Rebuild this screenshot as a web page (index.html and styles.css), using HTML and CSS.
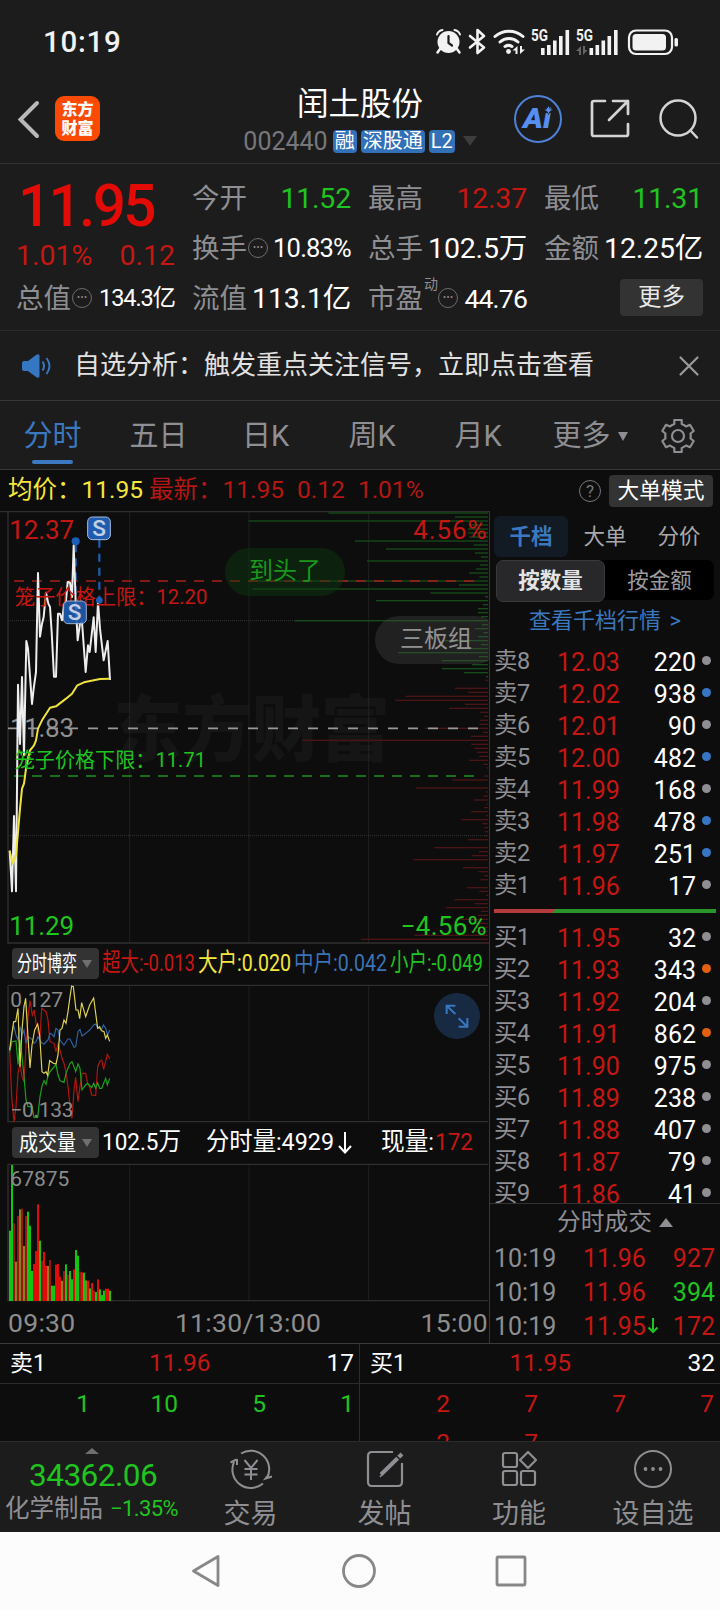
FILE: index.html
```html
<!DOCTYPE html>
<html lang="zh-CN">
<head>
    <meta charset="UTF-8">
    <meta name="viewport" content="width=device-width, initial-scale=1.0">
    <title>闰土股份 002440</title>
    <link rel="stylesheet" href="styles.css">
</head>
<body>
<div class="status-bar">
    <span class="clock">10:19</span>
    <svg class="status-icons" width="248" height="30" viewBox="0 0 248 30">
        <g fill="#f2f2f2" stroke="none">
            <circle cx="13.500" cy="15" r="11"/>
            <path d="M5 22 L2.500 25.500 M22 22 L24.500 25.500" stroke="#f2f2f2" stroke-width="2.500" stroke-linecap="round"/>
            <path d="M2 7.500 A7 7 0 0 1 7.500 3 M25 7.500 A7 7 0 0 0 19.500 3" fill="none" stroke="#f2f2f2" stroke-width="2" stroke-linecap="round"/>
            <path d="M13.500 9 V16 L17 18.500" fill="none" stroke="#1c1c1c" stroke-width="2.200" stroke-linecap="round"/>
            <path d="M35 9 L49 20.500 L42.500 26 V3 L49 9 L35 20.500" fill="none" stroke="#f2f2f2" stroke-width="2.600" stroke-linejoin="round" stroke-linecap="round"/>
            <g fill="none" stroke="#f2f2f2" stroke-width="3" stroke-linecap="round">
                <path d="M60 9.500 A21 21 0 0 1 88 9.500"/>
                <path d="M65 15 A13.500 13.500 0 0 1 83 15"/>
                <path d="M70 19.500 A6.500 6.500 0 0 1 77 19.500"/>
            </g>
            <circle cx="73.500" cy="24.500" r="2.400"/>
            <path d="M82.500 19 V27 H80.500 V23.500 H77.500 Z M85 27 V19 H87 V22.500 H90 Z"/>
            <rect x="106" y="21" width="3.600" height="7"/>
            <rect x="112" y="18" width="3.600" height="10"/>
            <rect x="118" y="13.500" width="3.600" height="14.500"/>
            <rect x="124" y="9" width="3.600" height="19"/>
            <rect x="130.500" y="3" width="3.600" height="25"/>
            <rect x="154.500" y="21" width="3.600" height="7"/>
            <rect x="160.500" y="18" width="3.600" height="10"/>
            <rect x="166.500" y="13.500" width="3.600" height="14.500"/>
            <rect x="172.500" y="9" width="3.600" height="19"/>
            <rect x="179" y="3" width="3.600" height="25"/>
            <path d="M146 19 V28 H144 V24 H141 Z M148 28 V19 H150 V23 H152.500 Z" fill="#666"/>
            <text class="net" x="96" y="14" textLength="17" lengthAdjust="spacingAndGlyphs">5G</text>
            <text class="net" x="141" y="14" textLength="17" lengthAdjust="spacingAndGlyphs">5G</text>
            <rect x="194" y="3.500" width="43" height="23.500" rx="7" fill="none" stroke="#f2f2f2" stroke-width="2.200"/>
            <rect x="197.500" y="7" width="33.500" height="16.500" rx="3.500"/>
            <rect x="239.500" y="11" width="3.500" height="8.500" rx="1.500"/>
        </g>
    </svg>
</div>

<div class="header">
    <div class="header-left">
        <svg width="24" height="40" viewBox="0 0 24 40" fill="none" stroke="#b9b9b9" stroke-width="4" stroke-linecap="round"><path d="M20 4 L3.500 20.500 L20 37"/></svg>
        <div class="logo">东方<br>财富</div>
    </div>
    <div class="header-title">
        <h1>闰土股份</h1>
        <div class="code-row">
            <span class="code">002440</span>
            <span class="badge">融</span>
            <span class="badge">深股通</span>
            <span class="badge">L2</span>
            <svg class="code-arrow" width="14" height="10" viewBox="0 0 14 10"><path d="M0 0 H14 L7 10 Z" fill="#3d3d3d"/></svg>
        </div>
    </div>
    <div class="header-right">
        <svg width="48" height="48" viewBox="0 0 48 48">
            <circle cx="24" cy="24" r="23" fill="none" stroke="#4d82d8" stroke-width="2"/>
            <text class="ai" x="9" y="33" textLength="28" lengthAdjust="spacingAndGlyphs">Ai</text>
            <path d="M34.500 10.500 L36 13.500 L39 15 L36 16.500 L34.500 19.500 L33 16.500 L30 15 L33 13.500 Z" fill="#568ff0" stroke="#1c1c1c" stroke-width=".8"/>
        </svg>
        <svg width="40" height="40" viewBox="0 0 40 40" fill="none" stroke="#d4d4d4" stroke-width="2.700" stroke-linecap="round" stroke-linejoin="round">
            <path d="M15 2 H4 Q2 2 2 4 V35 Q2 37 4 37 H36 Q38 37 38 35 V25"/>
            <path d="M23 2 H38 V15 M38 2 L19 21"/>
        </svg>
        <svg width="42" height="42" viewBox="0 0 42 42" fill="none" stroke="#d4d4d4" stroke-width="2.500" stroke-linecap="round">
            <circle cx="20" cy="20" r="17.500"/>
            <path d="M32.500 32.500 L39 39.500"/>
        </svg>
    </div>
</div>

<div class="quote">
    <div class="quote-col">
        <div class="price">11.95</div>
        <div class="change"><span>1.01%</span><span>0.12</span></div>
        <div class="cell"><span class="label">总值<i class="dots">•••</i></span><span class="value small">134.3亿</span></div>
    </div>
    <div class="quote-col">
        <div class="cell"><span class="label">今开</span><span class="value down">11.52</span></div>
        <div class="cell"><span class="label">换手<i class="dots">•••</i></span><span class="value mid">10.83%</span></div>
        <div class="cell"><span class="label">流值</span><span class="value">113.1亿</span></div>
    </div>
    <div class="quote-col">
        <div class="cell"><span class="label">最高</span><span class="value up">12.37</span></div>
        <div class="cell"><span class="label">总手</span><span class="value">102.5万</span></div>
        <div class="cell"><span class="label">市盈<sup>动</sup><i class="dots">•••</i></span><span class="value pe">44.76</span></div>
    </div>
    <div class="quote-col">
        <div class="cell"><span class="label">最低</span><span class="value down">11.31</span></div>
        <div class="cell"><span class="label">金额</span><span class="value">12.25亿</span></div>
        <div class="cell end"><span class="more">更多</span></div>
    </div>
</div>

<div class="notice">
    <svg width="30" height="26" viewBox="0 0 30 26">
        <path d="M2 8 H6 L14 2 Q17.500 0 17.500 3 V23 Q17.500 26 14 24 L6 18 H2 Q0 18 0 16 V10 Q0 8 2 8 Z" fill="#3577c2"/>
        <path d="M20.500 8.500 Q23.500 13 20.500 17.500 M24.500 5 Q30.500 13 24.500 21" fill="none" stroke="#3577c2" stroke-width="2"/>
    </svg>
    <span class="notice-text">自选分析：触发重点关注信号，立即点击查看</span>
    <svg width="20" height="20" viewBox="0 0 20 20" stroke="#9a9a9a" stroke-width="2.200" stroke-linecap="round"><path d="M1.500 1.500 L18.500 18.500 M18.500 1.500 L1.500 18.500"/></svg>
</div>

<div class="tabs">
    <span class="tab active">分时</span>
    <span class="tab">五日</span>
    <span class="tab">日K</span>
    <span class="tab">周K</span>
    <span class="tab">月K</span>
    <span class="tab">更多<svg width="10" height="9" viewBox="0 0 10 9"><path d="M0 0 H10 L5 9 Z" fill="#8e8e93"/></svg></span>
    <span class="tab">
        <svg width="36" height="36" viewBox="0 0 36 36" fill="none" stroke="#8e8e93" stroke-width="2.200" stroke-linejoin="round">
            <path d="M14.300 2 H21.700 V6 Q24 6.800 26 8.500 L30 6.800 L33.700 13 L30.500 15.500 Q31 18 30.500 20.500 L33.700 23 L30 29.200 L26 27.500 Q24 29.200 21.700 30 V34 H14.300 V30 Q12 29.200 10 27.500 L6 29.200 L2.300 23 L5.500 20.500 Q5 18 5.500 15.500 L2.300 13 L6 6.800 L10 8.500 Q12 6.800 14.300 6 Z"/>
            <circle cx="18" cy="18" r="6"/>
        </svg>
    </span>
</div>

<div class="avg-bar">
    <span class="avg">均价：11.95</span>
    <span class="last">最新：11.95</span>
    <span class="last">0.12</span>
    <span class="last">1.01%</span>
    <span class="help">?</span>
    <span class="big-mode">大单模式</span>
</div>

<div class="main">
    <div class="charts">
        <div class="price-chart">
            <!-- all chart drawings use 3 units per pixel -->
            <svg width="489" height="433" viewBox="0 0 1467 1299">
                <text class="watermark" x="340" y="733" textLength="830" lengthAdjust="spacingAndGlyphs">东方财富</text>
                <path class="frame" d="M0 2 H1467 M24 2 V1296 H1467"/>
                <path class="grid" d="M24 329 H1464 M24 974 H1464 M389 2 V1296 M747 2 V1296 M1106 2 V1296"/>
                <g id="depth"></g>
                <text class="axis up" x="28" y="84" textLength="194">12.37</text>
                <text class="axis up" x="1240" y="84" textLength="220">4.56%</text>
                <text class="axis flat" x="30" y="679" textLength="192">11.83</text>
                <text class="axis down" x="28" y="1273" textLength="194">11.29</text>
                <text class="axis down" x="1202" y="1273" textLength="258">−4.56%</text>
                <path class="limit-up" d="M42 210 H1424"/>
                <path class="prev-close" d="M24 652 H1440"/>
                <path class="limit-down" d="M42 795 H1424"/>
                <path class="mark-line" d="M227 100 V290 M298 86 V262"/>
                <polyline class="line price-line" points="29,1019 36,1141 42,915 48,1141 54,521 60,699 66,498 72,733 79,390 84,413 96,579 101,533 108,483 114,186 120,377 126,338 131,318 138,245 145,278 150,288 155,363 162,497 168,497 174,308 180,308 186,328 192,283 198,268 203,213 210,215 216,258 221,103 227,273 233,388 240,338 246,333 257,483 264,403 269,423 281,319 287,423 294,273 300,353 311,448 323,390 330,507"/>
                <polyline class="line avg-line" points="29,1019 38,1058 48,1033 54,963 60,893 66,833 72,818 78,773 84,743 90,718 102,703 108,688 114,653 126,628 150,590 168,586 198,563 216,548 232,523 252,514 300,504 330,503"/>
                <text class="limit-text up" x="44" y="278" textLength="578" lengthAdjust="spacingAndGlyphs">笼子价格上限：12.20</text>
                <text class="limit-text down" x="44" y="767" textLength="574" lengthAdjust="spacingAndGlyphs">笼子价格下限：11.71</text>
                <circle cx="227" cy="91" r="12" fill="#1c5fb8"/>
                <circle cx="298" cy="268" r="10" fill="#1c5fb8"/>
                <g class="sell-mark">
                    <rect x="263" y="18" width="68" height="68" rx="14"/>
                    <text x="297" y="75">S</text>
                    <rect x="190" y="270" width="69" height="68" rx="14" opacity=".9"/>
                    <text x="224" y="327">S</text>
                </g>
            </svg>
            <span class="pill green">到头了</span>
            <span class="pill grey">三板组</span>
        </div>

        <div class="sub-head">
            <span class="select"><svg width="86" height="31" viewBox="0 0 86 31"><text class="sel" x="5" y="23" textLength="60" lengthAdjust="spacingAndGlyphs">分时博弈</text><path d="M70 12 H80 L75 20 Z" fill="#6f6f6f"/></svg></span>
            <svg width="386" height="36" viewBox="0 0 386 36">
                <text class="sub up" x="-1" y="25" textLength="93" lengthAdjust="spacingAndGlyphs">超大:-0.013</text>
                <text class="sub avg" x="95" y="25" textLength="93" lengthAdjust="spacingAndGlyphs">大户:0.020</text>
                <text class="sub blue" x="191" y="25" textLength="93" lengthAdjust="spacingAndGlyphs">中户:0.042</text>
                <text class="sub down" x="287" y="25" textLength="93" lengthAdjust="spacingAndGlyphs">小户:-0.049</text>
            </svg>
        </div>

        <div class="game-chart">
            <svg width="489" height="137" viewBox="0 135 1467 411">
                <path class="frame" d="M24 136 H1464 M24 136 V545 H1464"/>
                <path class="grid" d="M389 136 V545 M747 136 V545 M1106 136 V545"/>
                <polyline class="thin red-line" points="29,330 35,470 42,545 48,500 54,400 60,370 66,410 72,425 78,320 84,230 90,182 97,225 103,210 108,250 115,280 120,290 125,205 138,215 144,240 150,305 162,310 168,335 174,312 180,330 186,355 192,370 198,395 204,440 210,500 216,535 222,450 227,412 234,485 240,440 246,400 257,400 263,430 269,440 275,465 287,467 293,380 299,365 305,360 311,388 322,343 329,356"/>
                <polyline class="thin green-line" points="29,335 36,305 48,303 54,373 60,300 66,350 72,410 78,480 84,500 96,500 102,532 113,532 120,470 126,438 132,422 138,433 144,408 150,395 168,374 174,405 180,422 192,427 198,400 210,370 216,365 222,380 227,395 234,372 240,385 246,450 257,435 263,430 275,443 281,430 287,445 293,428 299,445 305,445 317,415 322,435 329,415"/>
                <polyline class="thin blue-line" points="29,330 36,280 41,256 48,285 54,300 60,260 66,285 72,270 78,310 84,290 96,298 102,310 108,305 114,290 120,300 126,310 132,312 144,300 150,280 156,283 162,290 168,265 174,270 180,300 192,315 204,297 210,297 222,322 227,320 234,275 240,268 246,288 257,280 269,270 281,255 287,252 293,263 305,268 310,255 317,265 323,285 329,270"/>
                <polyline class="thin yellow-line" points="29,330 36,280 41,245 47,245 54,205 60,380 66,270 72,200 77,175 84,290 90,384 96,315 104,270 113,252 119,285 126,395 132,400 138,395 143,406 149,362 160,370 168,372 174,345 180,270 186,265 192,240 198,250 204,215 210,170 215,138 220,140 228,210 234,210 239,236 245,188 257,230 269,195 281,174 293,265 299,260 304,272 312,275 317,295 322,285 329,304"/>
                <text class="scale" x="31" y="200" textLength="158">0.127</text>
                <text class="scale" x="31" y="530" textLength="190">−0.133</text>
                <circle cx="1371" cy="228" r="69" fill="#182a42"/>
                <path d="M1366 222 L1341 198 M1340 222 V197 H1366 M1376 235 L1402 260 M1376 260 H1402 V234" fill="none" stroke="#3577c2" stroke-width="6"/>
            </svg>
        </div>

        <div class="sub-head volume-head">
            <span class="select"><svg width="86" height="31" viewBox="0 0 86 31"><text class="sel" x="7" y="23" textLength="57" lengthAdjust="spacingAndGlyphs">成交量</text><path d="M70 12 H80 L75 20 Z" fill="#6f6f6f"/></svg></span>
            <svg width="386" height="36" viewBox="0 0 386 36">
                <text class="sub" x="-1" y="26" textLength="79" lengthAdjust="spacingAndGlyphs">102.5万</text>
                <text class="sub" x="103" y="26" textLength="128" lengthAdjust="spacingAndGlyphs">分时量:4929</text>
                <path d="M242 8 V28 M236 22 L242 28.500 L248 22" fill="none" stroke="#fff" stroke-width="2"/>
                <text class="sub" x="278" y="26" textLength="53" lengthAdjust="spacingAndGlyphs">现量:</text>
                <text class="sub up" x="332" y="26" textLength="38" lengthAdjust="spacingAndGlyphs">172</text>
            </svg>
        </div>

        <div class="volume-chart">
            <svg width="489" height="137" viewBox="0 672 1467 411">
                <path class="frame" d="M24 673 H1464 M24 673 V1082 H1464"/>
                <path class="grid" d="M389 673 V1082 M747 673 V1082 M1106 673 V1082"/>
                <g id="volume"></g>
                <text class="scale" x="31" y="738" textLength="177">67875</text>
            </svg>
        </div>
        <div class="time-axis"><span>09:30</span><span>11:30/13:00</span><span>15:00</span></div>
    </div>

    <div class="side">
        <div class="side-tabs"><span class="active">千档</span><span>大单</span><span>分价</span></div>
        <div class="toggle"><span class="active">按数量</span><span>按金额</span></div>
        <div class="depth-link">查看千档行情 &gt;</div>
        <div class="book">
            <div id="asks" class="asks"></div>
            <svg class="ratio" width="222" height="4" viewBox="0 0 222 4"><path d="M0 0 H222 V4 H0 Z" fill="#299429"/><path d="M0 0 H62 L58 4 H0 Z" fill="#b43c3c"/></svg>
            <div id="bids"></div>
        </div>
        <div class="deals-head">分时成交<svg width="14" height="9" viewBox="0 0 14 9"><path d="M7 0 L14 9 H0 Z" fill="#8e8e93"/></svg></div>
        <div class="deal"><span>10:19</span><span class="up">11.96</span><span class="up">927</span></div>
        <div class="deal"><span>10:19</span><span class="up">11.96</span><span class="down">394</span></div>
        <div class="deal"><span>10:19</span><span class="up">11.95<svg width="12" height="16" viewBox="0 0 12 16" fill="none" stroke="#1fc41f" stroke-width="2"><path d="M6 0 V14 M1.500 9.500 L6 14 L10.500 9.500"/></svg></span><span class="up">172</span></div>
    </div>
</div>

<div class="queues">
    <div class="queue">
        <div class="queue-head"><span>卖1</span><span class="up">11.96</span><span>17</span></div>
        <div class="queue-list down"><span>1</span><span>10</span><span>5</span><span>1</span></div>
    </div>
    <div class="queue">
        <div class="queue-head"><span>买1</span><span class="up">11.95</span><span>32</span></div>
        <div class="queue-list up"><span>2</span><span>7</span><span>7</span><span>7</span><span>2</span><span>7</span></div>
    </div>
</div>

<div class="bottom-nav">
    <div class="index">
        <svg width="14" height="6" viewBox="0 0 14 6"><path d="M7 0 L14 6 H0 Z" fill="#6f6f72"/></svg>
        <div class="index-value">34362.06</div>
        <div class="index-name">化学制品<span>−1.35%</span></div>
    </div>
    <div class="nav-item">
        <svg width="44" height="40" viewBox="0 0 44 40" fill="none" stroke="#8e8e93" stroke-width="2">
            <path d="M12 4.500 A18.500 18.500 0 0 1 38 29 M40 25 L36.500 29.500 L43 27.500 M34 34.500 A18.500 18.500 0 0 1 5 13 M8 10 V16 M1.500 13.500 L7.500 10.500"/>
            <path d="M15.500 11 L22 19 L28.500 11 M22 19 V31 M15.500 20 H28.500 M15.500 25.500 H28.500"/>
        </svg>
        <span>交易</span>
    </div>
    <div class="nav-item">
        <svg width="38" height="40" viewBox="0 0 38 40" fill="none" stroke="#8e8e93" stroke-width="2.200">
            <path d="M27 3 H6 Q2 3 2 7 V33 Q2 37 6 37 H32 Q36 37 36 33 V14"/>
            <path d="M36 5 L15 25.500" stroke-width="4"/><path d="M14 28 L18 23" stroke-width="1.500"/><path d="M30.500 7 L34 10.500" stroke="#1c1c1c" stroke-width="1.500"/>
        </svg>
        <span>发帖</span>
    </div>
    <div class="nav-item">
        <svg width="38" height="40" viewBox="0 0 38 40" fill="none" stroke="#8e8e93" stroke-width="2.200" stroke-linejoin="round">
            <rect x="3" y="4" width="14" height="14" rx="2"/>
            <rect x="3" y="22" width="14" height="14" rx="2"/>
            <rect x="21" y="22" width="14" height="14" rx="2"/>
            <path d="M28 3 L36 11 L28 19 L20 11 Z"/>
        </svg>
        <span>功能</span>
    </div>
    <div class="nav-item">
        <svg width="40" height="40" viewBox="0 0 40 40" fill="#8e8e93">
            <circle cx="20" cy="20" r="18" fill="none" stroke="#8e8e93" stroke-width="2"/>
            <circle cx="12.500" cy="20" r="1.900"/><circle cx="20" cy="20" r="1.900"/><circle cx="27.500" cy="20" r="1.900"/>
        </svg>
        <span>设自选</span>
    </div>
</div>

<div class="system-nav">
    <svg width="30" height="36" viewBox="0 0 30 36"><path d="M27 3.500 V32.500 L2.500 18 Z"/></svg>
    <svg width="36" height="36" viewBox="0 0 36 36"><circle cx="18" cy="18" r="15.500"/></svg>
    <svg width="32" height="32" viewBox="0 0 32 32"><rect x="2" y="2" width="28" height="28" rx="1"/></svg>
</div>

<script src="app.js"></script>
</body>
</html>
```
FILE: styles.css
```css
* {
    box-sizing: border-box;
}

body {
    margin: 0;
    width: 720px;
    height: 1610px;
    overflow: hidden;
    background: #1c1c1c;
    color: #fff;
    font-family: Roboto, "Noto Sans CJK SC", sans-serif;
    line-height: 1;
}

svg {
    display: block;
    flex: none;
    overflow: visible;
}

.up {
    color: #c41712;
    fill: #c41712;
}

.down {
    color: #1fc41f;
    fill: #1fc41f;
}

.blue {
    fill: #3b74b6;
}

/* Status bar */
.status-bar {
    display: flex;
    justify-content: space-between;
    align-items: center;
    height: 80px;
    padding: 4px 37px 0 43px;
}

.clock {
    padding-top: 2px;
    font-size: 29.5px;
    font-weight: 500;
    letter-spacing: .7px;
    color: #f2f2f2;
}

.net {
    font-size: 16.5px;
    font-weight: 700;
}

/* Header */
.header {
    display: grid;
    grid-template-columns: 1fr auto 1fr;
    height: 84px;
    border-bottom: 1px solid #333;
}

.header-left {
    display: flex;
    align-items: center;
    gap: 14px;
    padding: 0 0 6px 17px;
}

.logo {
    width: 45px;
    height: 45px;
    padding-top: 5px;
    border-radius: 9px;
    background: #fb4a04;
    font-size: 16px;
    font-weight: 900;
    line-height: 18.5px;
    text-align: center;
}

.header-title {
    padding-top: 5px;
}

.header-title h1 {
    margin: 0;
    font-size: 31.5px;
    font-weight: 400;
    line-height: 40px;
    text-align: center;
}

.code-row {
    display: flex;
    align-items: center;
    gap: 4px;
    height: 24px;
    margin-top: 4px;
}

.code {
    margin-right: 1px;
    font-size: 25px;
    color: #77777b;
}

.badge {
    height: 23px;
    padding: 0 2px;
    border-radius: 4px;
    background: #3270b8;
    font-size: 20px;
    line-height: 22px;
}

.code-arrow {
    margin-left: 4px;
}

.header-right {
    display: flex;
    align-items: center;
    justify-content: flex-end;
    gap: 28px;
    padding: 0 20px 6px 0;
}

.ai {
    font-size: 27px;
    font-weight: 900;
    font-style: italic;
    fill: #568ff0;
}

/* Quote */
.quote {
    display: grid;
    grid-template-columns: repeat(4, 159px);
    justify-content: space-between;
    height: 167px;
    padding: 10px 17px 0 16px;
    border-bottom: 1px solid #2a2a2a;
}

.price {
    height: 64px;
    padding-left: 2px;
    font-size: 58.5px;
    font-weight: 500;
    line-height: 65px;
    letter-spacing: -2.7px;
    color: #e30b06;
}

.change {
    display: flex;
    justify-content: space-between;
    height: 36px;
    font-size: 28.5px;
    line-height: 36px;
    color: #c41712;
}

.cell {
    display: flex;
    align-items: center;
    justify-content: space-between;
    height: 50px;
    white-space: nowrap;
}

.cell.end {
    justify-content: flex-end;
    padding-bottom: 3px;
}

.label {
    display: flex;
    align-items: center;
    font-size: 27.5px;
    color: #8e8e93;
}

.label sup {
    align-self: flex-start;
    width: 13px;
    margin: -8px 0 0 1px;
    font-size: 14px;
}

.dots {
    width: 20px;
    height: 20px;
    margin: -3px 0 0 1px;
    border: 1.5px solid #6c6c70;
    border-radius: 50%;
    font-size: 9px;
    font-style: normal;
    letter-spacing: .5px;
    line-height: 17px;
    text-align: center;
    text-indent: .5px;
}

.value {
    font-size: 28.5px;
    letter-spacing: -.2px;
}

.value.mid {
    font-size: 25.5px;
    letter-spacing: -.8px;
}

.value.small {
    font-size: 23.5px;
    letter-spacing: -1.1px;
}

.value.pe {
    font-size: 26.5px;
    letter-spacing: -.8px;
}

.more {
    width: 83px;
    height: 37px;
    border-radius: 4px;
    background: #333;
    font-size: 23.5px;
    line-height: 36px;
    text-align: center;
    color: #e8e8e8;
}

/* Notice */
.notice {
    display: flex;
    align-items: center;
    height: 70px;
    padding: 0 21px 0 22px;
    border-bottom: 1px solid #383838;
}

.notice-text {
    flex: 1;
    margin: -2px 0 0 22px;
    font-size: 26px;
    color: #e2e2e2;
}

/* Tabs */
.tabs {
    display: grid;
    grid-template-columns: 105px 107px 107px 106px 106px 118px 58px;
    height: 69px;
    padding-top: 2px;
    border-bottom: 1px solid #383838;
}

.tab {
    display: flex;
    align-items: center;
    justify-content: center;
    gap: 7px;
    font-size: 29px;
    color: #8e8e93;
}

.tab.active {
    position: relative;
    color: #3b78bf;
}

.tab.active::after {
    content: "";
    position: absolute;
    left: 32px;
    bottom: 5px;
    width: 41px;
    height: 4px;
    border-radius: 2px;
    background: #3b78bf;
}

.avg-bar {
    display: flex;
    align-items: center;
    height: 41px;
    padding: 0 7px 0 8px;
    background: #0d0d0d;
    font-size: 24.5px;
}

.avg {
    margin-right: 6px;
    fill: #f5e63c;
    color: #f5e63c;
}

.last {
    margin-right: 13px;
    color: #b41712;
}

.help {
    width: 22px;
    height: 22px;
    margin: 0 8px 0 auto;
    border: 1.5px solid #77777a;
    border-radius: 50%;
    font-size: 17px;
    line-height: 20px;
    text-align: center;
    color: #77777a;
}

.big-mode {
    width: 104px;
    height: 32px;
    border-radius: 4px;
    background: #333;
    font-size: 21.700px;
    line-height: 32px;
    text-align: center;
}

/* Charts */
.main {
    display: flex;
    height: 833px;
    background: #0d0d0d;
    border-bottom: 1px solid #3a3a3a;
}

.charts {
    width: 490px;
    border-right: 1px solid #383838;
}

.price-chart {
    position: relative;
    height: 433px;
    overflow: hidden;
}

.frame {
    fill: none;
    stroke: #2f2f2f;
    stroke-width: 4;
}

.grid {
    fill: none;
    stroke: #343434;
    stroke-width: 3;
    stroke-dasharray: 3 3;
}

.watermark {
    font-size: 215px;
    font-weight: 900;
    fill: #151515;
}

.axis {
    font-size: 78px;
}

.flat {
    fill: #8f8f8f;
}

.limit-text {
    font-size: 63px;
}

.limit-up,
.limit-down {
    fill: none;
    stroke: #a81f1a;
    stroke-width: 4;
    stroke-dasharray: 30 24;
}

.limit-down {
    stroke: #1f8f24;
}

.prev-close {
    fill: none;
    stroke: #999;
    stroke-width: 5;
    stroke-dasharray: 30 30;
}

.mark-line {
    fill: none;
    stroke: #1f5ba8;
    stroke-width: 7;
    stroke-dasharray: 24 18;
}

.line {
    fill: none;
    stroke-width: 6;
    stroke-linejoin: round;
}

.price-line {
    stroke: #eee;
}

.avg-line {
    stroke: #f0e23c;
}

.sell-mark rect {
    fill: #1f5cb0;
    stroke: #a9c0e0;
    stroke-width: 3;
}

.sell-mark text {
    font-size: 68px;
    font-weight: 500;
    text-anchor: middle;
    fill: #c3d0e4;
}

.pill {
    position: absolute;
    height: 48px;
    font-size: 24px;
    line-height: 46px;
}

.pill.green {
    left: 225px;
    top: 37px;
    width: 120px;
    padding-left: 24px;
    border-radius: 24px;
    background: rgba(10, 60, 15, .45);
    color: #1b971b;
}

.pill.grey {
    left: 375px;
    top: 105px;
    width: 125px;
    padding-left: 25px;
    border-radius: 24px;
    background: rgba(80, 80, 80, .3);
    color: #929292;
}

.sub-head {
    display: flex;
    align-items: center;
    gap: 4px;
    height: 41px;
    padding: 0 0 2px 12px;
}

.volume-head {
    height: 42px;
}

.game-chart,
.volume-chart {
    height: 137px;
}

.select {
    width: 87px;
    height: 31px;
    border-radius: 4px;
    background: #333;
}

.sel {
    font-size: 22px;
    fill: #fff;
}

.sub {
    font-size: 24.5px;
}

.sub:not(.up):not(.down):not(.avg):not(.blue) {
    fill: #fff;
}

.thin {
    fill: none;
    stroke-width: 3.500;
}

.red-line {
    stroke: #b31511;
}

.green-line {
    stroke: #1aa31a;
}

.blue-line {
    stroke: #2f62a0;
}

.yellow-line {
    stroke: #e0d350;
}

.scale {
    font-size: 63px;
    fill: #8b8b8b;
}

.time-axis {
    display: flex;
    justify-content: space-between;
    align-items: center;
    height: 42px;
    padding: 2px 1px 0 8px;
    font-size: 26.5px;
    letter-spacing: .3px;
    color: #8e8e8e;
}

/* Order book */
.side {
    width: 230px;
    padding-top: 5px;
}

.side-tabs {
    display: grid;
    grid-template-columns: repeat(3, 74px);
    height: 40px;
    padding-left: 4px;
    font-size: 21.5px;
    line-height: 41px;
    text-align: center;
    color: #a9a9ab;
}

.side-tabs .active {
    border-radius: 6px;
    background: #121a23;
    font-weight: 700;
    color: #3b78bf;
}

.toggle {
    display: grid;
    grid-template-columns: 1fr 1fr;
    width: 218px;
    height: 40px;
    margin: 4px 0 0 6px;
    border-radius: 7px;
    background: #000;
    font-size: 21.5px;
    line-height: 41px;
    text-align: center;
    color: #9c9c9e;
}

.toggle .active {
    border: 1px solid #39393b;
    border-radius: 7px;
    background: #28282b;
    font-weight: 700;
    line-height: 40px;
    color: #e4e4e4;
}

.depth-link {
    height: 40px;
    font-size: 22px;
    line-height: 42px;
    text-align: center;
    word-spacing: 3px;
    color: #3b78bf;
}

.book {
    height: 564px;
    overflow: hidden;
    border-bottom: 1px solid #333;
}

.asks {
    margin-top: -26px;
}

.order {
    display: grid;
    grid-template-columns: 63px 66px 73px 8px;
    align-items: center;
    height: 32px;
    padding-left: 4px;
    font-size: 25px;
}

.order .name {
    font-size: 23.5px;
    letter-spacing: -.6px;
    color: #8e8e93;
}

.order .amount {
    text-align: right;
}

.order .dot {
    width: 9px;
    height: 9px;
    margin: -3px 0 0 6px;
    border-radius: 50%;
    background: #8e8e93;
}

.order .dot.buy {
    background: #e35f12;
}

.order .dot.sell {
    background: #3577c2;
}

.ratio {
    margin: 7px 0 9px 4px;
}

.deals-head {
    display: flex;
    align-items: center;
    justify-content: center;
    gap: 7px;
    height: 37px;
    padding-left: 20px;
    font-size: 23.700px;
    color: #8e8e93;
}

.deal {
    display: grid;
    grid-template-columns: 89px 77px 1fr;
    align-items: center;
    height: 34px;
    padding: 0 5px 0 4px;
    font-size: 25px;
    color: #8e8e93;
}

.deal .up {
    color: #c41712;
}

.deal .down {
    color: #1fc41f;
}

.deal span:nth-child(2) {
    display: flex;
    align-items: center;
    gap: 1px;
}

.deal span:last-child {
    text-align: right;
}

/* Queues */
.queues {
    display: grid;
    grid-template-columns: 1fr 1fr;
    height: 98px;
    background: #0d0d0d;
    border-bottom: 1px solid #2c2c2c;
    font-size: 24.5px;
}

.queue {
    height: 97px;
    overflow: hidden;
}

.queue:first-child {
    border-right: 1px solid #2c2c2c;
}

.queue-head {
    display: grid;
    grid-template-columns: 1fr 66px 1fr;
    align-items: center;
    height: 40px;
    padding: 0 5px 0 10px;
    border-bottom: 1px solid #2c2c2c;
}

.queue-head span:first-child {
    font-size: 23px;
}

.queue-head span:last-child {
    text-align: right;
}

.queue-list {
    display: grid;
    grid-template-columns: repeat(4, 88px);
    grid-auto-rows: 39.5px;
    align-items: center;
    padding-left: 2px;
    text-align: right;
}

/* Bottom navigation */
.bottom-nav {
    display: grid;
    grid-template-columns: 184px 133px 135px 134px 134px;
    height: 90px;
}

.index svg {
    margin: 6px 0 0 85px;
}

.index-value {
    margin-top: 5px;
    padding-left: 29px;
    font-size: 31.5px;
    line-height: 34px;
    letter-spacing: -.5px;
    color: #1fc41f;
}

.index-name {
    display: flex;
    align-items: center;
    gap: 7px;
    padding-left: 5px;
    font-size: 24.5px;
    line-height: 32px;
    color: #8e8e93;
}

.index-name span {
    font-size: 22px;
    letter-spacing: -.6px;
    color: #1fc41f;
}

.nav-item {
    display: flex;
    flex-direction: column;
    align-items: center;
    gap: 9px;
    padding-top: 7px;
    font-size: 27px;
    line-height: 32px;
    color: #8e8e93;
}

.system-nav {
    display: flex;
    align-items: center;
    gap: 120px;
    height: 78px;
    padding-left: 191px;
    background: #fcfcfc;
}

.system-nav svg:last-child {
    margin-left: -2px;
}

.system-nav svg {
    fill: none;
    stroke: #888;
    stroke-width: 2.800;
    stroke-linejoin: round;
}
```
FILE: app.js
```js
const SVG = 'http://www.w3.org/2000/svg';

const addRect = (parent, x, y, width, height, fill) => {
    const rect = document.createElementNS(SVG, 'rect');
    rect.setAttribute('x', x);
    rect.setAttribute('y', y);
    rect.setAttribute('width', width);
    rect.setAttribute('height', height);
    rect.setAttribute('fill', fill);
    parent.appendChild(rect);
};

// resting orders per price level, top to bottom: [y, bar length]
const asksDepth = [
    [6, 479], [18, 99], [30, 718], [42, 54], [54, 60], [66, 60], [78, 56], [90, 399], [102, 43], [114, 306],
    [126, 39], [138, 21], [150, 363], [162, 24], [174, 36], [186, 57], [198, 26], [210, 720], [222, 87],
    [234, 708], [246, 173], [257, 9], [269, 336], [281, 15], [293, 30], [305, 30], [317, 21], [329, 579],
    [341, 18], [353, 39], [365, 14], [377, 30], [389, 134], [401, 21], [413, 94], [425, 269], [437, 27],
    [449, 138], [461, 48], [473, 138], [485, 72], [497, 6]
];
const bidsDepth = [
    [508, 9], [532, 99], [544, 59], [556, 247], [568, 279], [580, 69], [592, 117], [604, 23], [616, 12],
    [628, 23], [640, 26], [652, 189], [664, 15], [676, 51], [688, 557], [700, 50], [712, 42], [724, 33],
    [736, 26], [748, 56], [760, 14], [771, 4], [795, 12], [807, 107], [831, 216], [843, 6], [855, 14],
    [867, 42], [879, 4], [890, 12], [902, 50], [914, 6], [926, 80], [938, 17], [950, 12], [962, 9], [974, 9],
    [986, 59], [1010, 162], [1022, 27], [1034, 49], [1046, 224], [1070, 76], [1082, 29], [1094, 11],
    [1106, 23], [1130, 63], [1141, 26], [1153, 6], [1166, 101], [1178, 40], [1190, 126], [1201, 21],
    [1213, 30], [1225, 81], [1237, 40], [1249, 30], [1261, 50], [1273, 221], [1285, 381], [1297, 17]
];
const depth = document.getElementById('depth');
asksDepth.forEach(([y, w]) => addRect(depth, 1464 - w, y - 2, w, 4, '#174d1a'));
bidsDepth.forEach(([y, w]) => addRect(depth, 1464 - w, y - 2, w, 4, '#4b1515'));

// one bar per minute: colour key + top
const colors = { g: '#14c414', r: '#e00c08', d: '#961612', o: '#8c7d1d' };
const minutes = ('g872 g675 d850 o965 d828 o808 d806 o918 d828 g815 g857 g993 r972 r933 r793 g902 d962 r936 r977 ' +
    'o978 d960 g1037 g1037 r974 r972 r1010 o1022 d993 g973 d1005 g993 g1018 r988 g930 g947 d995 r997 g998 ' +
    'o1021 r1022 g1045 r1029 d1052 g1056 r1018 g1048 g1065 g1052 r1046 r1046 g1052').split(' ');
const volume = document.getElementById('volume');
minutes.forEach((m, i) => {
    const top = Number(m.slice(1));
    addRect(volume, 27 + i * 6, top, 6, 1083 - top, colors[m[0]]);
});

const asks = [
    ['卖9', '12.04', 105, ''], ['卖8', '12.03', 220, ''], ['卖7', '12.02', 938, 'sell'], ['卖6', '12.01', 90, ''],
    ['卖5', '12.00', 482, 'sell'], ['卖4', '11.99', 168, ''], ['卖3', '11.98', 478, 'sell'],
    ['卖2', '11.97', 251, 'sell'], ['卖1', '11.96', 17, '']
];
const bids = [
    ['买1', '11.95', 32, ''], ['买2', '11.93', 343, 'buy'], ['买3', '11.92', 204, ''], ['买4', '11.91', 862, 'buy'],
    ['买5', '11.90', 975, ''], ['买6', '11.89', 238, ''], ['买7', '11.88', 407, ''], ['买8', '11.87', 79, ''],
    ['买9', '11.86', 41, '']
];
const renderOrders = (id, rows) => {
    document.getElementById(id).innerHTML = rows.map(([name, price, amount, kind]) => `
        <div class="order">
            <span class="name">${name}</span>
            <span class="up">${price}</span>
            <span class="amount">${amount}</span>
            <span class="dot ${kind}"></span>
        </div>`).join('');
};
renderOrders('asks', asks);
renderOrders('bids', bids);
```
